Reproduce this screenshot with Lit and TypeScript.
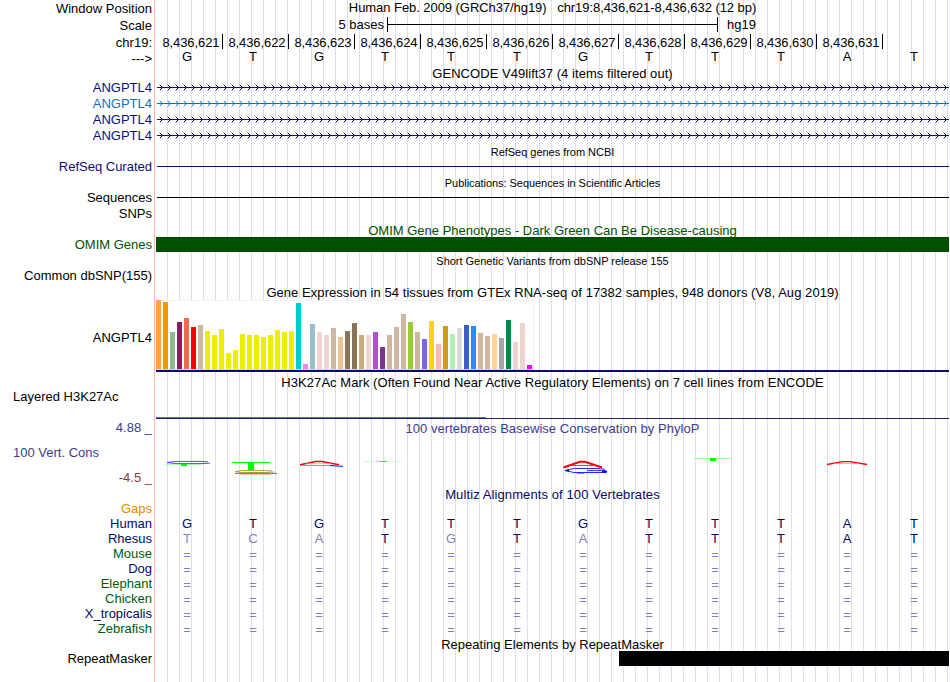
import { LitElement, html, css, svg } from "lit";
import { customElement, property } from "lit/decorators.js";
import { styleMap } from "lit/directives/style-map.js";

const NAVY = "#0c0c78";
const BLUE = "#1470b4";
const ALIGN = "#000a64";
const GREEN = "#005a0a";
const SEQUENCE = "GTGTTTGTTTAT";

// [bar height, colour] for each tissue
const YEL = "#eeee00", TAN = "#cdb79e", ROSE = "#eed5d2", BROWN = "#8b7355";
const TISSUES: [number, string][] = [
  [69, "#ffa54f"], [67, "#ee9a00"], [37, "#8fbc8f"], [47, "#8b1c62"], [51, "#ee6a50"],
  [42, "#ff0000"], [44, TAN], [38, YEL], [34, YEL], [40, YEL], [16, YEL], [19, YEL],
  [35, YEL], [34, YEL], [34, YEL], [32, YEL], [34, YEL], [39, YEL], [37, YEL], [38, YEL],
  [66, "#00cdcd"], [5, "#ee82ee"], [45, "#9ac0cd"], [37, ROSE], [34, ROSE], [41, TAN],
  [32, "#eec591"], [38, BROWN], [46, BROWN], [34, "#cdaa7d"], [34, ROSE], [37, "#b452cd"],
  [22, "#7a378b"], [34, TAN], [42, TAN], [55, TAN], [47, "#9acd32"], [37, TAN],
  [30, "#7a67ee"], [48, "#ffd700"], [25, "#ffb6c1"], [43, "#cd9b1d"], [35, "#b4eeb4"],
  [41, "#d9d9d9"], [44, "#3a5fcd"], [43, "#1e90ff"], [36, TAN], [33, TAN], [35, "#ffd39b"],
  [31, "#a6a6a6"], [49, "#008b45"], [27, ROSE], [46, ROSE], [4, "#ff00ff"],
];

const SPECIES: [string, string, string][] = [
  ["Human", ALIGN, SEQUENCE],
  ["Rhesus", ALIGN, "TCATGTATTTAT"],
  ["Mouse", GREEN, "============"],
  ["Dog", ALIGN, "============"],
  ["Elephant", GREEN, "============"],
  ["Chicken", GREEN, "============"],
  ["X_tropicalis", ALIGN, "============"],
  ["Zebrafish", GREEN, "============"],
];

@customElement("track-row")
class TrackRow extends LitElement {
  @property() label = "";
  @property() color = "#000";
  @property({ type: Number }) height = 16;
  @property({ type: Number }) drop = 0;
  @property({ type: Boolean }) start = false;

  static styles = css`
    :host { display: block; flex: none; }
    .row { display: flex; }
    .label {
      box-sizing: border-box; width: 152px; margin-right: 4px; flex: none;
      text-align: right; line-height: 15px; white-space: pre;
    }
    .start { text-align: left; padding-left: 13px; }
    .body { width: 793px; flex: none; }
  `;

  render() {
    return html`<div class="row" style=${styleMap({ height: this.height + "px" })}>
      <div class="label ${this.start ? "start" : ""}"
        style=${styleMap({ color: this.color, paddingTop: this.drop + "px" })}>${this.label}</div>
      <div class="body"><slot></slot></div>
    </div>`;
  }
}

interface Heading {
  text: string;
  height?: number;
  drop?: number;
  color?: string;
  small?: boolean;
  spacing?: number;
  label?: string;
}

@customElement("app-root")
class AppRoot extends LitElement {
  static styles = css`
    :host {
      display: block; width: 950px; height: 682px; overflow: hidden; background: #fff;
      font: 13px/15px "Liberation Sans", Arial, sans-serif; color: #000;
    }
    .page {
      display: flex; flex-direction: column; width: 949px; height: 682px;
      background:
        linear-gradient(#ffb4b4, #ffb4b4) 154px 0 / 1px 100% no-repeat,
        repeating-linear-gradient(90deg, #dcdcff 0 1px, transparent 1px 12px) 167px 0 / 782px 100% no-repeat;
    }
    .title { text-align: center; white-space: pre; line-height: 15px; }
    .small { font-size: 11px; }
    .scale { display: flex; padding-top: 1px; }
    .scale .from { width: 228px; text-align: right; margin-right: 3px; }
    .ruler {
      box-sizing: border-box; width: 331px; height: 15px; margin-right: 9px;
      border: solid #000; border-width: 0 1px;
      background: linear-gradient(#000, #000) 0 7px / 100% 1px no-repeat;
    }
    .ticks { display: flex; padding-top: 1px; }
    .tick {
      box-sizing: border-box; width: 66px; height: 15px; flex: none; text-align: right;
      padding: 1px 2.5px 0 0; border-right: 1px solid #000; white-space: nowrap; letter-spacing: -0.08px;
    }
    .tick:first-child { width: 67px; }
    .bases { display: grid; grid-template-columns: repeat(11, 66px) 68px; margin-left: -2px; text-align: center; }
    .miss { color: #8282b4; }
    .gap { padding-top: 1px; }
    svg { display: block; }
    .solid { height: 15px; }
    .omim { background: #005000; }
    .repeat { background: #000; margin-left: 463px; }
    .plot {
      box-sizing: border-box; width: 378px; height: 70px; display: flex; align-items: flex-end; gap: 2px;
      background: #fff; border: solid #f2f2f2; border-width: 1px 1px 1px 0; border-bottom-color: #d6d6d6;
    }
    .bar { width: 5px; flex: none; }
    .base { height: 2px; background: #0c0c78; }
    .signal { height: 1px; width: 330px; margin-top: 29px; background: #6464f0; }
    .axis { height: 1px; background: #242450; }
  `;

  heading({ text, height = 15, drop = 0, color = "#000", small = false, spacing = 0, label = "" }: Heading) {
    return html`<track-row height=${height} label=${label} color=${color}>
      <div class="title ${small ? "small" : ""}"
        style=${styleMap({ color, paddingTop: drop + "px", letterSpacing: spacing + "px" })}>${text}</div>
    </track-row>`;
  }

  bases(sequence: string, color: string) {
    return html`<div class="bases ${sequence[0] === "=" ? "gap" : ""}" style=${styleMap({ color })}>
      ${[...sequence].map((b, i) => html`<span class=${b !== SEQUENCE[i] ? "miss" : ""}>${b}</span>`)}
    </div>`;
  }

  gene(color: string) {
    return html`<track-row label="ANGPTL4" color=${color}>
      <svg width="793" height="16" fill="none" stroke=${color}>
        <path d="M1 7.5H793" />
        ${Array.from({ length: 99 }, (_, i) => svg`<path d="M${3.8 + i * 8} 4.8l2.7 2.7l-2.7 2.7" />`)}
      </svg>
    </track-row>`;
  }

  line(label: string, color: string) {
    return html`<track-row label=${label} color=${color}>
      <svg width="793" height="16"><path d="M1 7.5H793" stroke=${color} /></svg>
    </track-row>`;
  }

  conservation() {
    return html`<svg width="793" height="51" viewBox="156 436 793 51" fill="none">
      <path d="M165 464.5h36" stroke="#b4ffb4" />
      <path d="M208 461.8L200 461.4H176L167 462.6L177 463.6H203L210 463.2" stroke="#3c3cff" stroke-width=".9" />
      <path d="M181 464h6v2h-6z" fill="#00ff00" />
      <path d="M232 462.5h38" stroke="#00ff00" />
      <path d="M248 462h6v8h-6z" fill="#00ff00" />
      <path d="M272 471L264 470.5H242L235 471.6L242 472.5H266L274 472" stroke="#a0a014" stroke-width=".9" />
      <path d="M235 473.4H277" stroke="#6464ff" />
      <path d="M240 474.5H271" stroke="#ffa0a0" stroke-width=".7" />
      <path d="M300 464.8L316 461.6H322L339 464.8" stroke="#ff0000" stroke-width="1.5" />
      <path d="M306 463.7H331" stroke="#ff9696" stroke-width=".7" />
      <path d="M300 465.5H334" stroke="#8c8cff" />
      <path d="M330 465.6L343 466.4" stroke="#1414ff" />
      <path d="M364 461.5h37" stroke="#d2ffd2" />
      <path d="M380 461.5h6" stroke="#00ff00" />
      <path d="M563.5 467.5L580 461.8H585L602 467.5" stroke="#ff0000" stroke-width="1.9" />
      <path d="M572 465.5H593" stroke="#ff0000" stroke-width=".8" />
      <path d="M605 469.4L598 468.5H574L565 470.5L574 472.5H606V470.6H587" stroke="#2828ff" />
      <path d="M564 470.5l5-1.3v2.6zM602 471h5v1.6h-5z" fill="#0000ff" />
      <path d="M563 473.5h37" stroke="#d2ffd2" />
      <path d="M578 473.5h6" stroke="#00ff00" />
      <path d="M694 458.5h38" stroke="#96ff96" />
      <path d="M710 458h6v3h-6z" fill="#00ff00" />
      <path d="M827 464.5L843 461.6H850L867 464.5" stroke="#ff0000" stroke-width="1.3" />
      <path d="M834 463.5H859" stroke="#ff8c8c" stroke-width=".7" />
    </svg>`;
  }

  render() {
    return html`<div class="page">
      <track-row label="Window Position" drop="1">
        <div class="title" style="letter-spacing:-0.06px">Human Feb. 2009 (GRCh37/hg19)   chr19:8,436,621-8,436,632 (12 bp)</div>
      </track-row>
      <track-row label="Scale" height="17" drop="2">
        <div class="scale"><span class="from">5 bases</span><div class="ruler"></div><span>hg19</span></div>
      </track-row>
      <track-row label="chr19:" drop="2">
        <div class="ticks">
          ${Array.from({ length: 11 }, (_, i) => html`<div class="tick">8,436,${621 + i}</div>`)}
        </div>
      </track-row>
      <track-row label="--->" drop="2">${this.bases(SEQUENCE, "#000")}</track-row>
      ${this.heading({ text: "GENCODE V49lift37 (4 items filtered out)", drop: 1, spacing: 0.05 })}
      ${[NAVY, BLUE, NAVY, NAVY].map((c) => this.gene(c))}
      ${this.heading({ text: "RefSeq genes from NCBI", drop: 1, small: true, spacing: -0.03 })}
      ${this.line("RefSeq Curated", NAVY)}
      ${this.heading({ text: "Publications: Sequences in Scientific Articles", drop: 1, small: true, spacing: -0.05 })}
      ${this.line("Sequences", "#000")}
      <track-row label="SNPs"></track-row>
      ${this.heading({ text: "OMIM Gene Phenotypes - Dark Green Can Be Disease-causing", drop: 1, color: "#005000" })}
      <track-row label="OMIM Genes" color="#005000" height="15">
        <div class="solid omim"></div>
      </track-row>
      ${this.heading({ text: "Short Genetic Variants from dbSNP release 155", drop: 2, small: true, spacing: -0.02 })}
      <track-row label="Common dbSNP(155)" height="18" drop="1"></track-row>
      ${this.heading({ text: "Gene Expression in 54 tissues from GTEx RNA-seq of 17382 samples, 948 donors (V8, Aug 2019)", spacing: 0.055 })}
      <track-row label="ANGPTL4" height="72" drop="30">
        <div class="plot">
          ${TISSUES.map(([h, c]) => html`<div class="bar" style=${styleMap({ height: h + "px", background: c })}></div>`)}
        </div>
        <div class="base"></div>
      </track-row>
      ${this.heading({ text: "H3K27Ac Mark (Often Found Near Active Regulatory Elements) on 7 cell lines from ENCODE", height: 16, drop: 3, spacing: 0.055 })}
      <track-row label="Layered H3K27Ac" start height="32" drop="1">
        <div class="signal"></div><div class="axis"></div>
      </track-row>
      ${this.heading({ text: "100 vertebrates Basewise Conservation by PhyloP", height: 16, drop: 1, color: "#3c3c8c", spacing: 0.045, label: "4.88 _" })}
      <track-row label="100 Vert. Cons" color="#3c3c8c" start height="34" drop="9">${this.conservation()}</track-row>
      <track-row label="-4.5 _" color="#8c3c3c" height="17"></track-row>
      ${this.heading({ text: "Multiz Alignments of 100 Vertebrates", height: 14, color: ALIGN, spacing: 0.1 })}
      <track-row label="Gaps" color="#e68a00" height="15"></track-row>
      ${SPECIES.map(([name, color, seq]) => html`<track-row label=${name} color=${color} height="15">${this.bases(seq, ALIGN)}</track-row>`)}
      ${this.heading({ text: "Repeating Elements by RepeatMasker", drop: 1 })}
      <track-row label="RepeatMasker" height="15">
        <div class="solid repeat"></div>
      </track-row>
    </div>`;
  }
}
